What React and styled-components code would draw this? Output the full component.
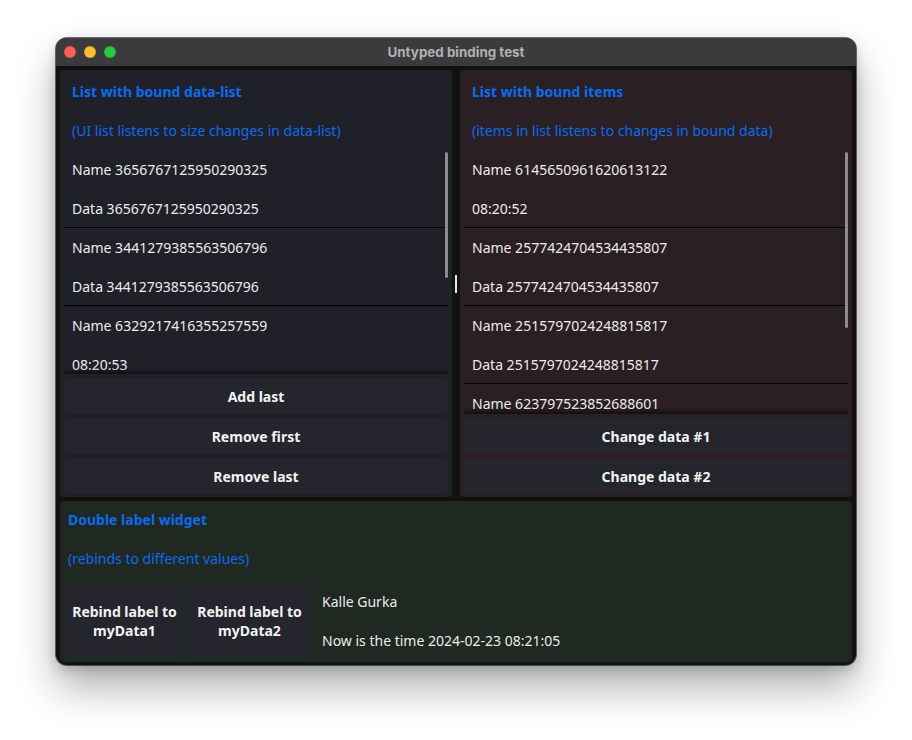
import React from 'react'
import styled, { createGlobalStyle } from 'styled-components'

const GlobalStyle = createGlobalStyle`
  html, body {
    margin: 0;
    padding: 0;
    background: #ffffff;
  }
  body {
    font-family: "Noto Sans", "Open Sans", sans-serif;
    -webkit-font-smoothing: antialiased;
  }
`

const Page = styled.div`
  width: 912px;
  height: 740px;
  padding: 38px 56px 0;
  box-sizing: border-box;
`

const Window = styled.div`
  width: 800px;
  height: 627px;
  border-radius: 11px;
  overflow: hidden;
  background: #111111;
  box-shadow: 0 0 0 1px rgba(0, 0, 0, 0.55), 0 22px 40px rgba(0, 0, 0, 0.32),
    0 4px 12px rgba(0, 0, 0, 0.18);
  display: flex;
  flex-direction: column;
`

const TitleBar = styled.div`
  height: 28px;
  flex: none;
  background: #3b3b3d;
  display: grid;
  grid-template-columns: 1fr auto 1fr;
  align-items: center;
  padding: 0 8px;
`

const Lights = styled.div`
  display: flex;
  gap: 8px;
`

const Light = styled.span`
  width: 12px;
  height: 12px;
  border-radius: 50%;
  background: ${p => p.$color};
  box-shadow: inset 0 0 0 0.5px rgba(0, 0, 0, 0.2);
`

const Title = styled.div`
  font-family: Inter, "Noto Sans", sans-serif;
  font-weight: 700;
  font-size: 13.4px;
  color: #b0b0b0;
`

const Body = styled.div`
  flex: 1;
  display: flex;
  flex-direction: column;
  gap: 4px;
  padding: 4px 4px 3px;
`

const Top = styled.div`
  height: 427px;
  display: grid;
  grid-template-columns: 392px 8px 392px;
`

const Handle = styled.div`
  width: 2px;
  height: 18px;
  align-self: center;
  justify-self: center;
  background: #e6e6e6;
`

const Panel = styled.div`
  background: ${p => p.$bg};
  border-radius: 4px;
  padding: 2px 4px 3px;
  display: flex;
  flex-direction: column;
  min-height: 0;
`

const Heading = styled.div`
  height: ${p => p.$h || 39}px;
  flex: none;
  display: flex;
  align-items: center;
  padding: 0 ${p => p.$pad ?? 8}px;
  font-size: 14px;
  font-weight: ${p => (p.$bold ? 700 : 400)};
  color: #0a6cf2;
  white-space: nowrap;
`

const List = styled.div`
  flex: 1;
  position: relative;
  overflow: hidden;
  min-height: 0;
  margin-bottom: 4px;

  &::after {
    content: '';
    position: absolute;
    left: 0;
    right: 0;
    bottom: 0;
    height: 6px;
    background: linear-gradient(rgba(0, 0, 0, 0), rgba(0, 0, 0, 0.55));
  }
`

const Group = styled.div`
  border-bottom: 1px solid #000000;
`

const Row = styled.div`
  height: ${p => p.$h}px;
  display: flex;
  align-items: center;
  padding: 0 8px;
  font-size: 14px;
  color: #ececec;
  white-space: nowrap;
`

const ScrollBar = styled.div`
  position: absolute;
  right: 0;
  top: 2px;
  width: 3px;
  height: ${p => p.$h}px;
  border-radius: 2px;
  background: #8d8b8e;
`

const Buttons = styled.div`
  display: flex;
  flex-direction: column;
  gap: 4px;
  flex: none;
`

const Button = styled.button`
  all: unset;
  box-sizing: border-box;
  flex: none;
  height: ${p => p.$h || 36}px;
  width: ${p => (p.$w ? `${p.$w}px` : 'auto')};
  border-radius: 4px;
  background: #25252d;
  display: flex;
  align-items: center;
  justify-content: center;
  text-align: center;
  font-family: "Noto Sans", sans-serif;
  font-size: 14px;
  font-weight: 700;
  line-height: 19px;
  color: #f2f2f2;
`

const Bottom = styled.div`
  flex: 1;
  background: #1f2821;
  border-radius: 4px;
  padding: 0 4px 5px;
  display: flex;
  flex-direction: column;
`

const RebindRow = styled.div`
  margin-top: 5px;
  height: 73px;
  display: flex;
  gap: 4px;
  align-items: center;
`

const Labels = styled.div`
  display: flex;
  flex-direction: column;
`

const leftItems = [
  ['Name 3656767125950290325', 'Data 3656767125950290325'],
  ['Name 3441279385563506796', 'Data 3441279385563506796'],
  ['Name 6329217416355257559', '08:20:53'],
]

const rightItems = [
  ['Name 6145650961620613122', '08:20:52'],
  ['Name 2577424704534435807', 'Data 2577424704534435807'],
  ['Name 2515797024248815817', 'Data 2515797024248815817'],
  ['Name 623797523852688601'],
]

const ItemList = ({ items, bar }) => (
  <List>
    {items.map(([a, b]) => (
      <Group key={a}>
        <Row $h={39}>{a}</Row>
        {b && <Row $h={38}>{b}</Row>}
      </Group>
    ))}
    <ScrollBar $h={bar} />
  </List>
)

const App = () => {
  return (
    <Page>
      <GlobalStyle />
      <Window>
        <TitleBar>
          <Lights>
            <Light $color="#fe5f57" />
            <Light $color="#febc2e" />
            <Light $color="#28c840" />
          </Lights>
          <Title>Untyped binding test</Title>
          <span />
        </TitleBar>
        <Body>
          <Top>
            <Panel $bg="#202029">
              <Heading $bold>List with bound data-list</Heading>
              <Heading>(UI list listens to size changes in data-list)</Heading>
              <ItemList items={leftItems} bar={126} />
              <Buttons>
                <Button>Add last</Button>
                <Button>Remove first</Button>
                <Button>Remove last</Button>
              </Buttons>
            </Panel>
            <Handle />
            <Panel $bg="#2a1f22">
              <Heading $bold>List with bound items</Heading>
              <Heading>(items in list listens to changes in bound data)</Heading>
              <ItemList items={rightItems} bar={176} />
              <Buttons>
                <Button>Change data #1</Button>
                <Button>Change data #2</Button>
              </Buttons>
            </Panel>
          </Top>
          <Bottom>
            <Heading $bold $h={36} $pad={4}>Double label widget</Heading>
            <Heading $h={42} $pad={4}>(rebinds to different values)</Heading>
            <RebindRow>
              <Button $h={73} $w={121}>Rebind label to<br />myData1</Button>
              <Button $h={73} $w={121}>Rebind label to<br />myData2</Button>
              <Labels>
                <Row $h={39}>Kalle Gurka</Row>
                <Row $h={39}>Now is the time 2024-02-23 08:21:05</Row>
              </Labels>
            </RebindRow>
          </Bottom>
        </Body>
      </Window>
    </Page>
  )
}

export default App
